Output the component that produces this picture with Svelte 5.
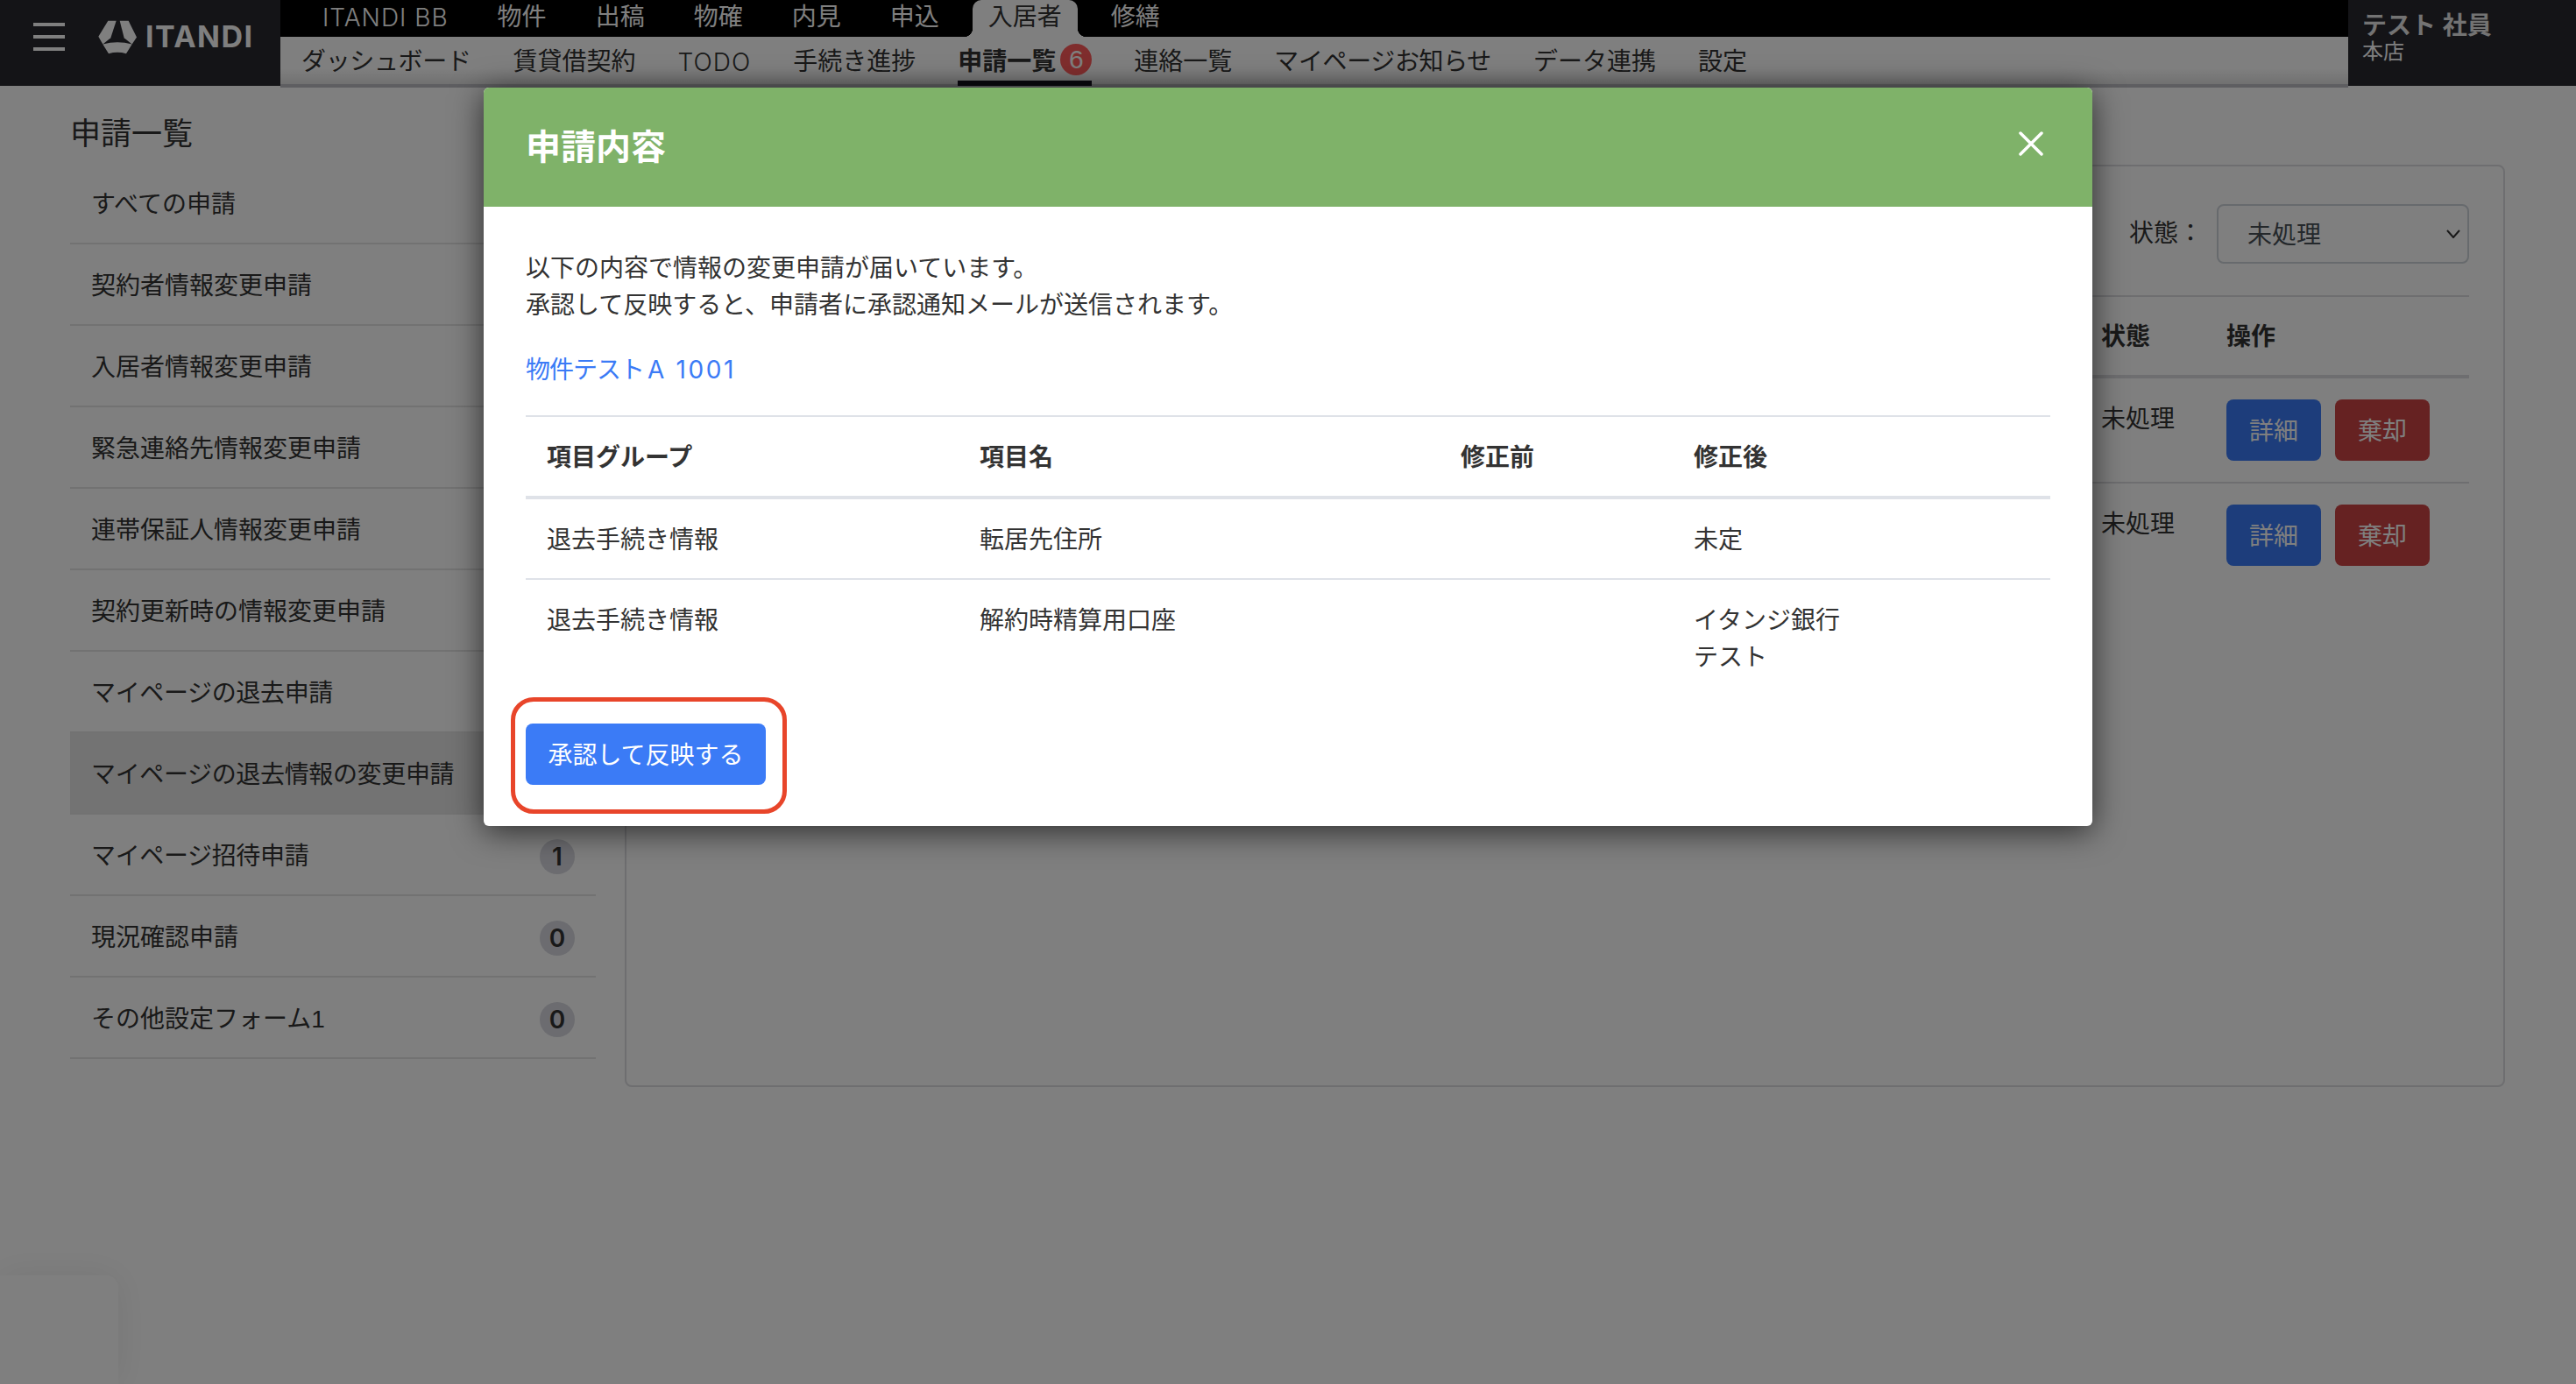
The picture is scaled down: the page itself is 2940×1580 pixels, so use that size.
<script lang="ts">
  const products = ['ITANDI BB', '物件', '出稿', '物確', '内見', '申込', '入居者', '修繕'];
  const subNav = ['ダッシュボード', '賃貸借契約', 'TODO', '手続き進捗', '申請一覧', '連絡一覧', 'マイページお知らせ', 'データ連携', '設定'];

  // only the counts the modal does not cover are shown
  const sideItems = [
    { label: 'すべての申請' },
    { label: '契約者情報変更申請' },
    { label: '入居者情報変更申請' },
    { label: '緊急連絡先情報変更申請' },
    { label: '連帯保証人情報変更申請' },
    { label: '契約更新時の情報変更申請' },
    { label: 'マイページの退去申請' },
    { label: 'マイページの退去情報の変更申請', active: true },
    { label: 'マイページ招待申請', count: 1 },
    { label: '現況確認申請', count: 0 },
    { label: 'その他設定フォーム1', count: 0 }
  ];

  const changes = [
    { group: '退去手続き情報', name: '転居先住所', before: '', after: ['未定'] },
    { group: '退去手続き情報', name: '解約時精算用口座', before: '', after: ['イタンジ銀行', 'テスト'] }
  ];

  const isLatin = (s: string) => /^[A-Z ]+$/.test(s);
  const isKana = (s: string) => s.startsWith('マイページ') || s.startsWith('ダッシュ');
</script>

<div class="page">
  <header class="topbar">
    <div class="brand">
      <div class="burger"><span></span><span></span><span></span></div>
      <svg class="mark" viewBox="0 0 132 116" aria-hidden="true">
        <path d="M34 2 H62 L43 60 L16 82 L1 56 Z" />
        <path d="M74 2 H104 L132 58 L116 82 L89 60 Z" />
        <path d="M16 82 Q66 68 116 82 L96 114 Q66 106 36 114 Z" />
      </svg>
      <span class="wordmark">ITANDI</span>
    </div>
    <nav class="nav">
      <div class="products">
        {#each products as item}
          <span class="product" class:latin={isLatin(item)} class:current={item === '入居者'}>{item}</span>
        {/each}
      </div>
      <div class="subnav">
        {#each subNav as item}
          <span class="sub" class:latin={isLatin(item)} class:tight={isKana(item)} class:current={item === '申請一覧'}>
            {item}
            {#if item === '申請一覧'}<b class="pill">6</b>{/if}
          </span>
        {/each}
      </div>
    </nav>
    <div class="user">
      <strong>テスト 社員</strong>
      <small>本店</small>
    </div>
  </header>

  <div class="content">
    <aside class="side">
      <h2>申請一覧</h2>
      <ul>
        {#each sideItems as item}
          <li class:active={item.active} class:tight={isKana(item.label)}>
            <span>{item.label}</span>
            {#if item.count !== undefined}<em>{item.count}</em>{/if}
          </li>
        {/each}
      </ul>
    </aside>

    <section class="panel">
      <div class="filter">
        <label for="status">状態：</label>
        <div class="select-wrap">
          <select id="status"><option>未処理</option></select>
          <svg viewBox="0 0 16 10" aria-hidden="true"><path d="M1 1 L8 9 L15 1" /></svg>
        </div>
      </div>
      <div class="row head"><span></span><span>状態</span><span>操作</span></div>
      {#each [0, 1] as i}
        <div class="row" class:last={i === 1}>
          <span></span>
          <span class="state">未処理</span>
          <span class="actions">
            <button class="detail">詳細</button>
            <button class="reject">棄却</button>
          </span>
        </div>
      {/each}
    </section>
  </div>

  <div class="widget"></div>
  <div class="backdrop"></div>

  <div class="modal">
    <div class="modal-head">
      <h1>申請内容</h1>
      <svg class="close" viewBox="0 0 28 28" aria-label="閉じる">
        <path d="M2 2 L26 26 M26 2 L2 26" />
      </svg>
    </div>
    <div class="modal-body">
      <p>以下の内容で情報の変更申請が届いています。<br />承認して反映すると、申請者に承認通知メールが送信されます。</p>
      <a href="#top">物件テスト<span>A 1001</span></a>
      <table>
        <colgroup>
          <col style="width: 494px" />
          <col style="width: 549px" />
          <col style="width: 266px" />
          <col style="width: 431px" />
        </colgroup>
        <thead>
          <tr><th>項目グループ</th><th>項目名</th><th>修正前</th><th>修正後</th></tr>
        </thead>
        <tbody>
          {#each changes as change}
            <tr>
              <td>{change.group}</td>
              <td>{change.name}</td>
              <td>{change.before}</td>
              <td>
                {#each change.after as line}<div>{line}</div>{/each}
              </td>
            </tr>
          {/each}
        </tbody>
      </table>
      <div class="submit">
        <button>承認して反映する</button>
        <span class="callout"></span>
      </div>
    </div>
  </div>
</div>

<style>
  :global(body) {
    margin: 0;
    background: #fff;
  }
  .page {
    position: relative;
    width: 2940px;
    height: 1580px;
    overflow: hidden;
    font-family: "Liberation Sans", "Noto Sans CJK JP", sans-serif;
    font-size: 28px;
    line-height: 42px;
    color: #333;
  }
  .latin {
    font-family: Inter, "Noto Sans CJK JP", sans-serif;
    font-weight: 300;
    letter-spacing: 1px;
  }
  .tight {
    letter-spacing: -0.35px;
  }

  /* top bar */
  .topbar {
    display: flex;
    align-items: flex-start;
    height: 100px;
  }
  .brand {
    display: flex;
    align-items: center;
    width: 320px;
    height: 98px;
    padding: 0 0 14px 38px;
    box-sizing: border-box;
    background: #28282f;
    color: #fff;
  }
  .burger {
    display: flex;
    flex-direction: column;
    gap: 10px;
    width: 36px;
  }
  .burger span {
    height: 4px;
    background: #fff;
  }
  .mark {
    width: 44px;
    height: 39px;
    margin-left: 38px;
    fill: #fff;
  }
  .wordmark {
    margin-left: 10px;
    font-family: Inter, sans-serif;
    font-size: 34px;
    font-weight: 700;
    letter-spacing: 1.5px;
  }
  .nav {
    flex: 1;
  }
  .products {
    display: flex;
    height: 42px;
    padding-left: 20px;
    background: #000;
    color: #fff;
    line-height: 40px;
  }
  .product {
    padding: 0 28px;
  }
  .product.current {
    position: relative;
    margin: 0 10px;
    padding: 0 18px;
    background: #fff;
    color: #333;
    border-radius: 10px 10px 0 0;
  }
  .product.current::before,
  .product.current::after {
    content: "";
    position: absolute;
    bottom: 0;
    width: 10px;
    height: 10px;
  }
  .product.current::before {
    left: -10px;
    background: radial-gradient(circle at 0 0, #000 10px, #fff 10.5px);
  }
  .product.current::after {
    right: -10px;
    background: radial-gradient(circle at 100% 0, #000 10px, #fff 10.5px);
  }
  .subnav {
    display: flex;
    gap: 48px;
    height: 58px;
    padding-left: 24px;
    background: linear-gradient(#fff 0, #fff 36px, #e2e2e2 54px, #bdbdc2 54px);
  }
  .sub {
    display: flex;
    align-items: center;
    gap: 5px;
    box-sizing: border-box;
    height: 56px;
    padding-top: 8px;
    border-bottom: 6px solid transparent;
    white-space: nowrap;
  }
  .sub.current {
    font-weight: 700;
    border-bottom-color: #14101e;
  }
  .pill {
    width: 36px;
    height: 36px;
    margin-top: -6px;
    border-radius: 50%;
    background: #ff5a5a;
    color: #fff;
    font-size: 30px;
    font-weight: 400;
    line-height: 36px;
    text-align: center;
  }
  .user {
    display: flex;
    flex-direction: column;
    width: 260px;
    height: 98px;
    padding: 12px 0 0 16px;
    box-sizing: border-box;
    background: #28282f;
    color: #fff;
  }
  .user strong {
    line-height: 36px;
    color: #e6e6e6;
  }
  .user small {
    font-size: 24px;
    line-height: 22px;
  }

  /* page behind the dialog */
  .content {
    display: flex;
    align-items: flex-start;
  }
  .side {
    width: 600px;
    margin-left: 80px;
  }
  .side h2 {
    margin: 31px 0 0;
    font-size: 35px;
    font-weight: 400;
    line-height: 44px;
    height: 55px;
  }
  .side ul {
    margin: 0;
    padding: 0;
    list-style: none;
  }
  .side li {
    display: flex;
    align-items: center;
    justify-content: space-between;
    box-sizing: border-box;
    height: 93px;
    padding: 4px 24px 0;
    border-bottom: 2px solid #e4e4e4;
  }
  .side li.active {
    background: #e6e6e6;
  }
  .side em {
    width: 40px;
    height: 40px;
    border-radius: 50%;
    background: #d8d9e0;
    font-family: Inter, sans-serif;
    font-size: 28px;
    font-style: normal;
    font-weight: 600;
    line-height: 40px;
    text-align: center;
    letter-spacing: 0;
  }
  .panel {
    box-sizing: border-box;
    width: 2146px;
    height: 1053px;
    margin: 88px 0 0 33px;
    padding: 0 39px 0 40px;
    border: 2px solid #dcdde0;
    border-radius: 8px;
  }
  .filter {
    display: flex;
    align-items: center;
    justify-content: flex-end;
    height: 149px;
    padding-top: 7px;
    box-sizing: border-box;
    border-bottom: 2px solid #dcdde0;
  }
  .filter label {
    margin-right: 16px;
  }
  .select-wrap {
    position: relative;
    width: 288px;
    height: 68px;
  }
  .select-wrap select {
    appearance: none;
    width: 100%;
    height: 100%;
    padding: 4px 0 0 33px;
    border: 2px solid #ced4da;
    border-radius: 8px;
    background: transparent;
    color: #495057;
    font: inherit;
  }
  .select-wrap svg {
    position: absolute;
    right: 10px;
    top: 29px;
    width: 16px;
    height: 10px;
    fill: none;
    stroke: #333;
    stroke-width: 2;
  }
  .row {
    display: grid;
    grid-template-columns: 1fr 143px 277px;
    box-sizing: border-box;
    height: 120px;
    padding-top: 24px;
    border-bottom: 2px solid #dcdde0;
  }
  .row.head {
    height: 93px;
    padding-top: 25px;
    border-bottom-width: 4px;
    font-weight: 700;
  }
  .row.last {
    border-bottom: 0;
  }
  .state {
    padding-top: 2px;
  }
  .actions {
    display: flex;
    gap: 16px;
  }
  button {
    border: 0;
    color: #fff;
    font: inherit;
    padding: 3px 0 0;
  }
  .actions button {
    width: 108px;
    height: 70px;
    border-radius: 8px;
  }
  .detail {
    background: #3b7bf6;
  }
  .reject {
    background: #cc4444;
  }
  .widget {
    position: absolute;
    left: 0;
    bottom: 0;
    width: 135px;
    height: 124px;
    border-top-right-radius: 14px;
    background: #fff;
    box-shadow: 0 0 40px rgba(0, 0, 0, 0.08);
  }
  .backdrop {
    position: absolute;
    inset: 0;
    background: rgba(0, 0, 0, 0.5);
  }

  /* dialog */
  .modal {
    position: absolute;
    left: 552px;
    top: 100px;
    width: 1836px;
    height: 843px;
    border-radius: 6px;
    background: #fff;
    box-shadow: 0 6px 36px rgba(0, 0, 0, 0.65);
  }
  .modal-head {
    display: flex;
    align-items: center;
    justify-content: space-between;
    box-sizing: border-box;
    height: 136px;
    padding: 0 56px 0 48px;
    border-radius: 6px 6px 0 0;
    background: #7fb269;
  }
  .modal-head h1 {
    margin: 0;
    color: #fff;
    font-size: 40px;
    font-weight: 700;
    line-height: 134px;
  }
  .close {
    width: 28px;
    height: 28px;
    margin-bottom: 8px;
    fill: none;
    stroke: #fff;
    stroke-width: 3.5;
    stroke-linecap: round;
  }
  .modal-body {
    padding: 50px 48px 0;
  }
  .modal-body p {
    margin: 0 0 31px;
  }
  .modal-body a {
    display: block;
    height: 42px;
    color: #3b7bf6;
    letter-spacing: -1px;
    text-decoration: none;
  }
  .modal-body a span {
    margin-left: 4px;
    font-family: Inter, sans-serif;
    letter-spacing: 2.6px;
  }
  table {
    width: 1740px;
    margin-top: 31px;
    border-collapse: collapse;
    table-layout: fixed;
  }
  th,
  td {
    padding: 26px 24px 22px;
    text-align: left;
    vertical-align: top;
  }
  thead tr {
    border-top: 2px solid #dfe2e8;
    border-bottom: 4px solid #dfe2e8;
  }
  tbody tr + tr {
    border-top: 2px solid #dfe2e8;
  }
  .submit {
    position: relative;
    width: 274px;
    margin-top: 32px;
  }
  .submit button {
    display: block;
    width: 274px;
    height: 70px;
    border-radius: 8px;
    background: #3b7bf6;
  }
  .callout {
    position: absolute;
    left: -17px;
    top: -30px;
    width: 315px;
    height: 133px;
    box-sizing: border-box;
    border: 5px solid #e8452a;
    border-radius: 26px;
  }
</style>
